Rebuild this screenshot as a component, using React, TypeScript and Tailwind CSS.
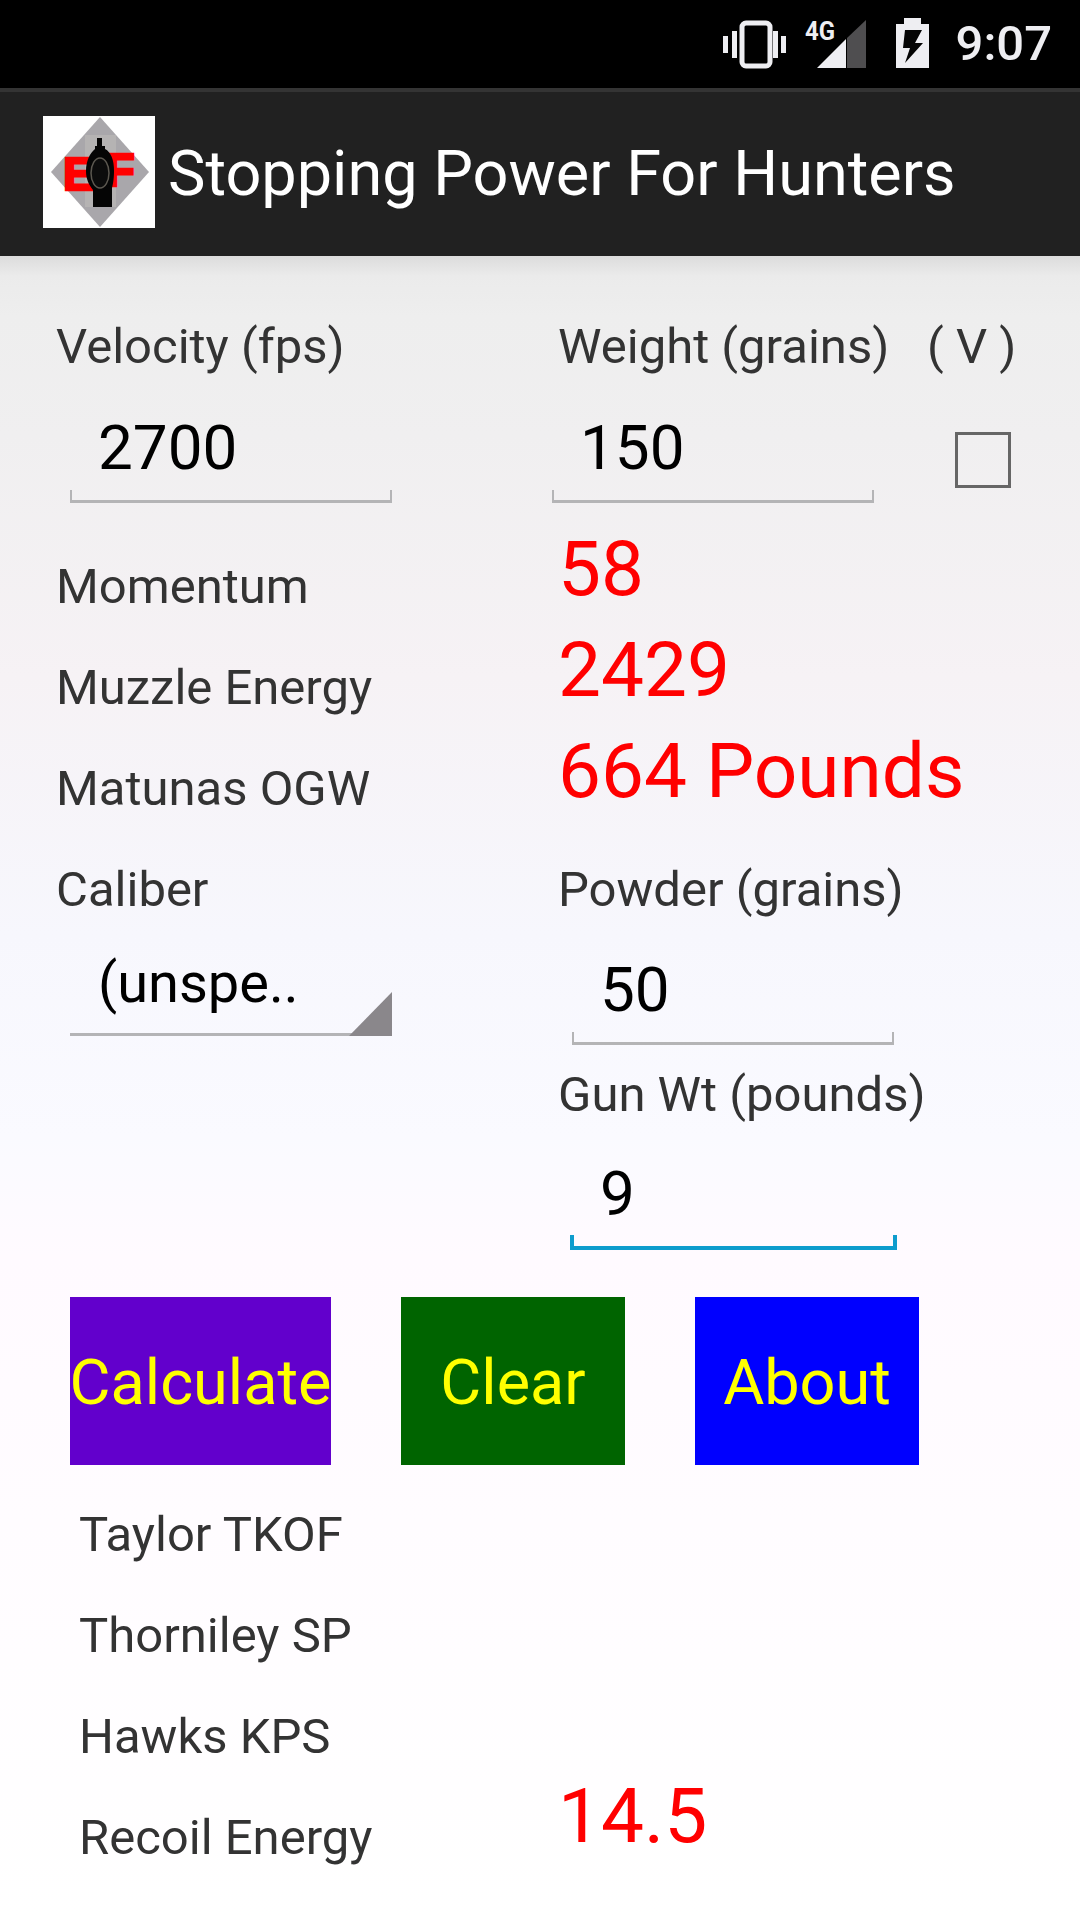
import React from "react";

const font = { fontFamily: "Roboto, sans-serif" };

function Field({ value, x, w, blue }: { value: string; x: string; w: string; blue?: boolean }) {
  return (
    <div className={`flex flex-col ${w}`}>
      <div className={`h-[72px] text-[62px] leading-[72px] text-black ${x}`}>{value}</div>
      <div
        className={
          blue
            ? "mt-[5px] h-[15px] border-x-[4px] border-b-[4px] border-[#0e9ccd]"
            : "mt-[6px] h-[13px] border-x-[2px] border-b-[3px] border-[#b4b4b6]"
        }
      />
    </div>
  );
}

function Row({ label, value, labelClass, valueClass = "pb-[8px]" }: { label: string; value?: string; labelClass: string; valueClass?: string }) {
  return (
    <div className="grid h-[101px] grid-cols-[558px_1fr]">
      <div className={`self-end pb-[6px] text-[49px] leading-[60px] text-[#333333] ${labelClass}`}>{label}</div>
      {value ? <div className={`self-center text-[76.5px] leading-[84px] text-[#ff0000] ${valueClass}`}>{value}</div> : <div />}
    </div>
  );
}

function Logo() {
  return (
    <svg width="112" height="112" viewBox="0 0 112 112" className="mb-[4px] shrink-0">
      <rect width="112" height="112" fill="#ffffff" />
      <polygon points="57,1 106,56 57,111 8,56" fill="#a9a7ab" />
      <rect x="42" y="19" width="31" height="72" fill="#b5b3b3" />
      <text x="20" y="74" fontFamily="Liberation Sans, sans-serif" fontWeight="700" fontSize="47" fill="#ff0000" stroke="#ff0000" strokeWidth="2.5">E</text>
      <text x="63" y="70" fontFamily="Liberation Sans, sans-serif" fontWeight="700" fontSize="47" fill="#ff0000" stroke="#ff0000" strokeWidth="2.5">F</text>
      <path
        d="M54 22h5v8h3v3c6 3 9 11 9 22 0 8-1 13-2 17v19H50V74c-4-5-7-11-7-19 0-10 4-18 9-22v-3h2z"
        fill="#050505"
      />
      <ellipse cx="57" cy="57" rx="9" ry="15" fill="#0c0c0c" stroke="#5c5850" strokeWidth="1.5" />
    </svg>
  );
}

function StatusIcons() {
  return (
    <svg width="220" height="88" viewBox="724 0 220 88" className="shrink-0">
      <rect x="724" y="36" width="5" height="17" fill="#eeeef2" />
      <rect x="733" y="31" width="5" height="27" fill="#eeeef2" />
      <rect x="743" y="23" width="28" height="43" rx="4" fill="none" stroke="#eeeef2" strokeWidth="5" />
      <rect x="774" y="31" width="5" height="27" fill="#eeeef2" />
      <rect x="782" y="36" width="5" height="17" fill="#eeeef2" />
      <text x="806" y="40" fontFamily="Roboto, sans-serif" fontWeight="700" fontSize="25" fill="#eeeef2" textLength="30" lengthAdjust="spacingAndGlyphs">4G</text>
      <polygon points="818,68 847,39 847,68" fill="#eeeef2" />
      <polygon points="848,68 848,38 867,20 867,68" fill="#4f4e50" />
      <path d="M905 18h17v6h8v44h-33V24h8z" fill="#eeeef2" />
      <polygon points="906,30 923,30 916,43 924,43 906,63 911,48 904,48" fill="#050505" />
    </svg>
  );
}

export default function App() {
  return (
    <div className="h-[1920px] w-[1080px] overflow-hidden bg-white" style={font}>
      <div className="flex h-[88px] items-center justify-end bg-black pr-[28px]">
        <StatusIcons />
        <div className="ml-[13px] text-[49px] font-medium leading-[56px] text-[#eeeef2]">9:07</div>
      </div>
      <div className="flex h-[168px] items-center border-t-[4px] border-[#343434] bg-[#212121] pl-[43px]">
        <Logo />
        <div className="ml-[13px] text-[63px] leading-[72px] text-white">Stopping Power For Hunters</div>
      </div>

      <div className="h-[1664px] bg-[linear-gradient(180deg,#dcdcdc_0px,#ebebeb_20px,#eeeeee_60px,#f0eff0_180px,#f6f2f5_420px,#f7f7fd_680px,#fafaff_880px,#fffaff_1000px,#ffffff_1664px)]">
        <div className="grid grid-cols-[558px_1fr] pt-[61px]">
          <div className="pl-[56px] text-[49px] leading-[60px] text-[#333333]">Velocity (fps)</div>
          <div className="flex text-[49px] leading-[60px] text-[#333333]">
            <div className="w-[369px]">Weight (grains)</div>
            <div>( V )</div>
          </div>
        </div>

        <div className="grid grid-cols-[559px_1fr] pt-[35px]">
          <div className="pl-[70px]">
            <Field value="2700" x="pl-[28px]" w="w-[322px]" />
          </div>
          <div className="-ml-[7px] flex items-start">
            <Field value="150" x="pl-[28px]" w="w-[322px]" />
            <div className="ml-[81px] mt-[20px] h-[56px] w-[56px] border-[3px] border-[#666666]" />
          </div>
        </div>

        <div className="pt-[19px]">
          <Row label="Momentum" value="58" labelClass="pl-[56px]" />
          <Row label="Muzzle Energy" value="2429" labelClass="pl-[56px]" />
          <Row label="Matunas OGW" value="664 Pounds" labelClass="pl-[56px]" />
        </div>

        <div className="grid grid-cols-[558px_1fr] pt-[35px] text-[49px] leading-[60px] text-[#333333]">
          <div className="pl-[56px]">Caliber</div>
          <div>Powder (grains)</div>
        </div>

        <div className="grid grid-cols-[559px_1fr]">
          <div className="pl-[70px] pt-[27px]">
            <div className="relative h-[89px] w-[322px] border-b-[3px] border-[#b4b4b6]">
              <div className="pl-[28px] text-[56px] leading-[72px] text-black">(unspe..</div>
              <div className="absolute -bottom-[3px] right-0 h-[44px] w-[43px] bg-[#8a878b] [clip-path:polygon(100%_0,100%_100%,0_100%)]" />
            </div>
          </div>
          <div>
            <div className="pl-[13px] pt-[34px]">
              <Field value="50" x="pl-[28px]" w="w-[322px]" />
            </div>
            <div className="-ml-px pt-[20px] text-[49px] leading-[60px] text-[#333333]">Gun Wt (pounds)</div>
            <div className="pl-[11px] pt-[33px]">
              <Field value="9" x="pl-[30px]" w="w-[327px]" blue />
            </div>
          </div>
        </div>

        <div className="flex items-start pl-[70px] pt-[47px] text-[63px] leading-[72px] text-[#ffff00]">
          <div className="flex h-[168px] w-[261px] items-center justify-center whitespace-nowrap bg-[#6200cc] pt-[4px]">Calculate</div>
          <div className="ml-[70px] flex h-[168px] w-[224px] items-center justify-center bg-[#006400] pt-[4px]">Clear</div>
          <div className="ml-[70px] flex h-[168px] w-[224px] items-center justify-center bg-[#0000ff] pt-[4px]">About</div>
        </div>

        <div className="pt-[5px]">
          <Row label="Taylor TKOF" labelClass="pl-[79px]" />
          <Row label="Thorniley SP" labelClass="pl-[79px]" />
          <Row label="Hawks KPS" labelClass="pl-[79px]" />
          <Row label="Recoil Energy" value="14.5" labelClass="pl-[79px]" valueClass="pb-[16px]" />
        </div>
      </div>
    </div>
  );
}
